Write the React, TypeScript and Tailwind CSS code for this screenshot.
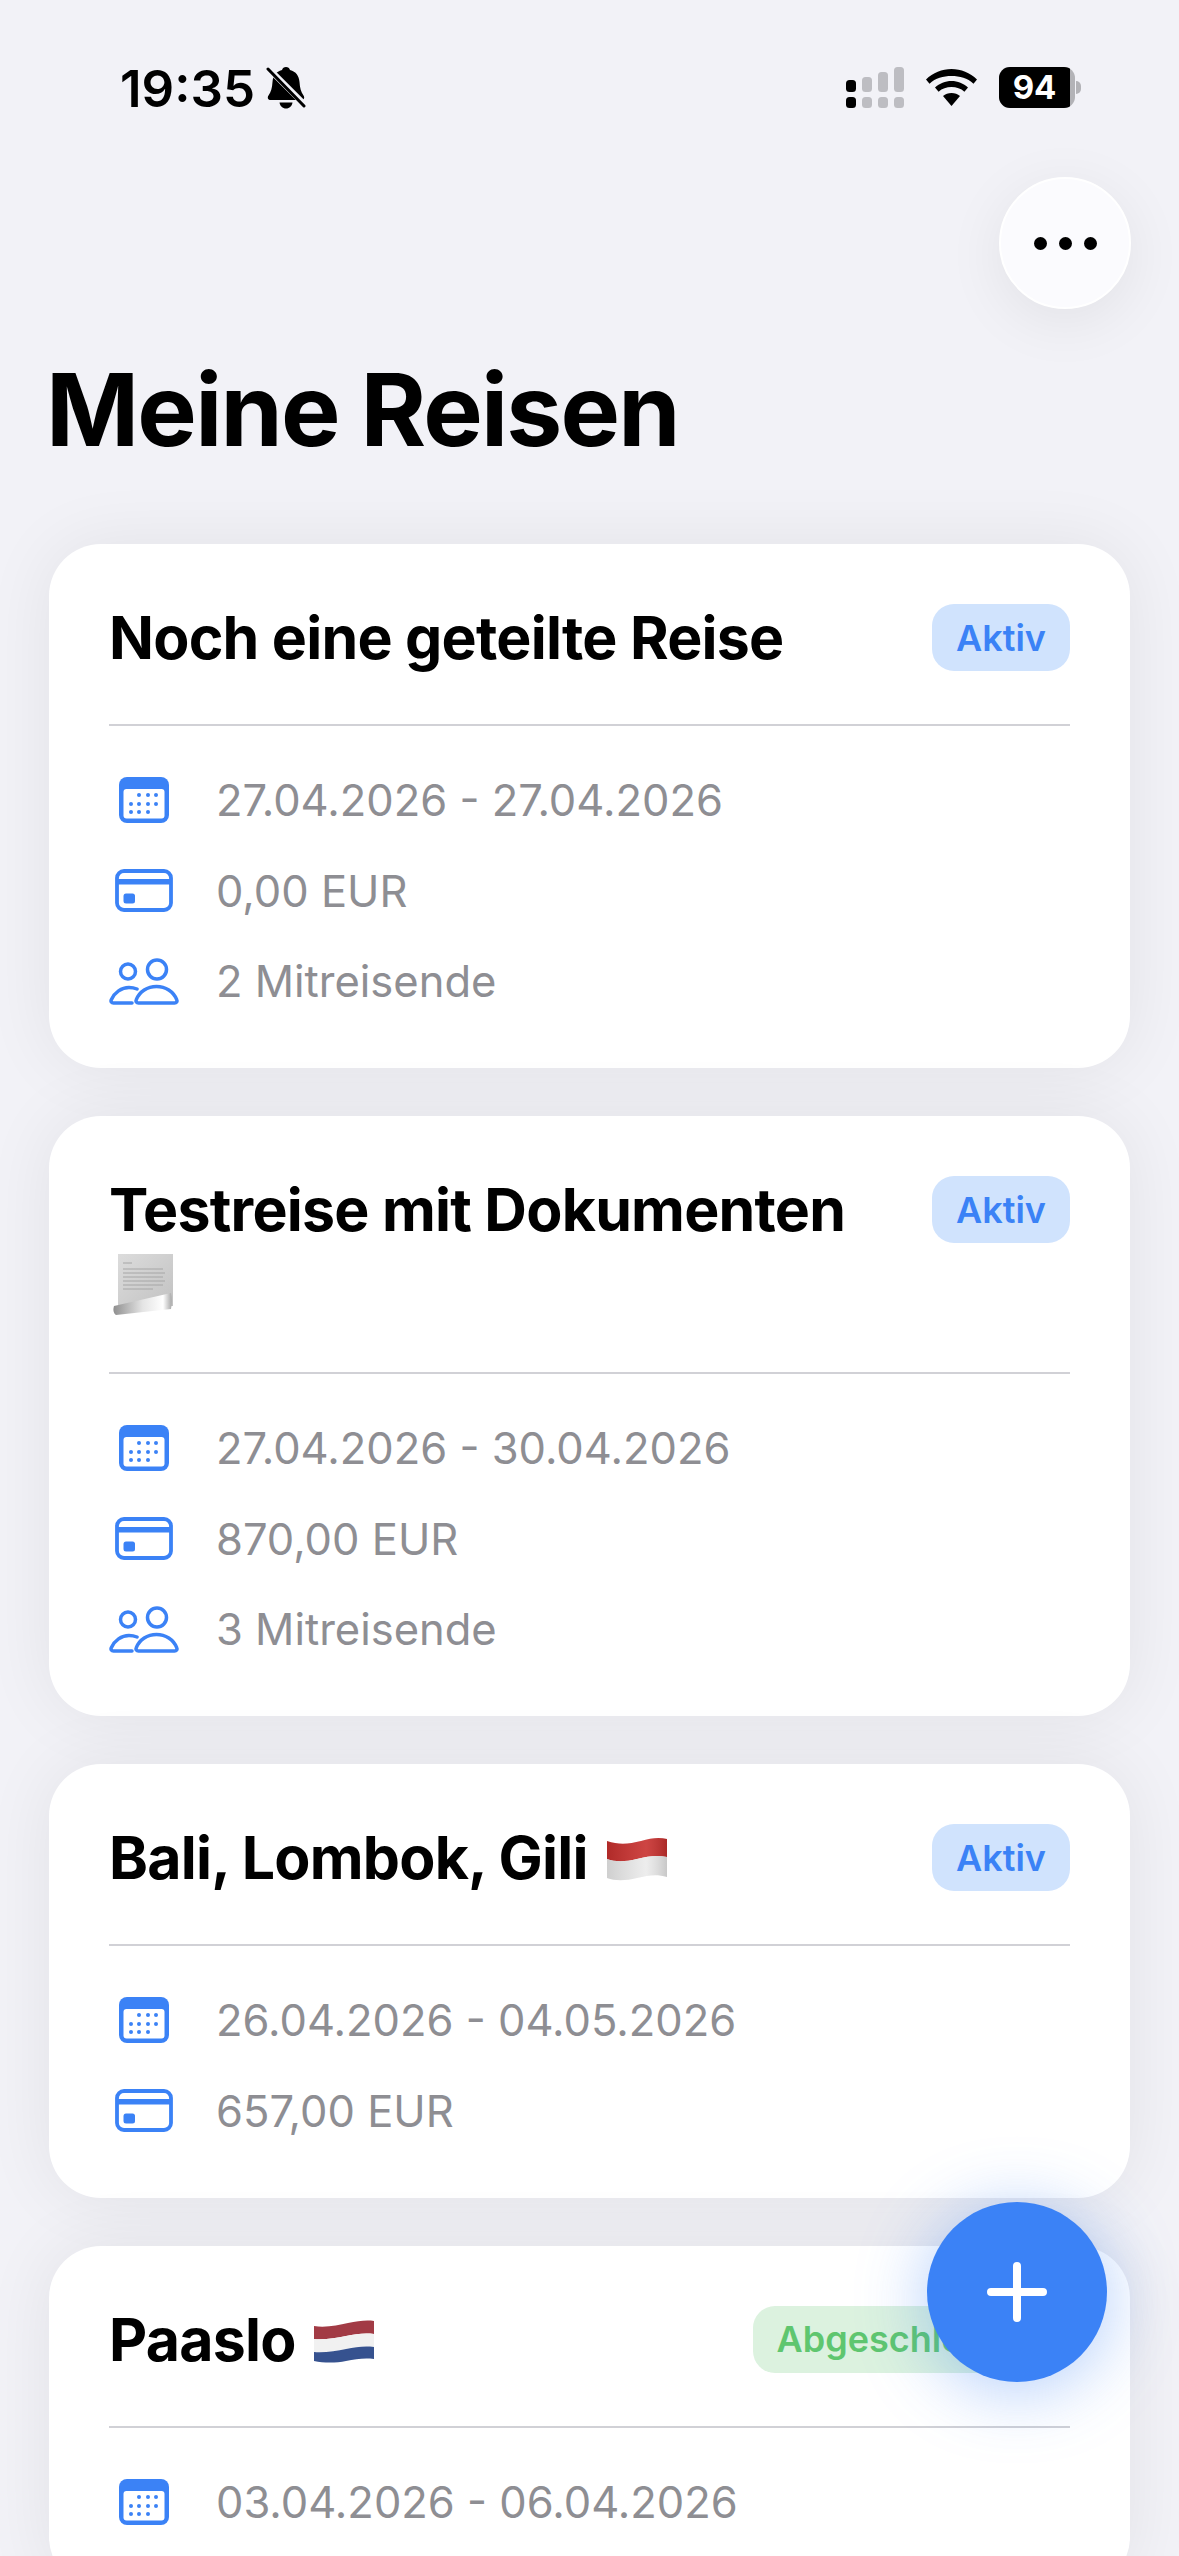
import type { ReactNode } from "react";

function BellSlash() {
  return (
    <svg viewBox="0 0 40 44" className="w-[40px] h-[44px] ml-[11px] mt-[-1px]">
      <path d="M20 1c2 0 3.500 1 4 3 6 1.500 9 6 9.500 12 .4 6 1.500 10 4 13.500 1.500 2.200.5 4.500-2 4.500H4.500c-2.500 0-3.500-2.300-2-4.500C5 26 6.100 22 6.500 16 7 10 10 5.500 16 4c.5-2 2-3 4-3z" fill="#000" />
      <path d="M13.500 36.500h13c-.5 3.500-3 6-6.500 6s-6-2.500-6.500-6z" fill="#000" />
      <path d="M0 0 40 40" stroke="#f2f2f7" strokeWidth="6" />
      <path d="M2 3 38 40" stroke="#000" strokeWidth="3" strokeLinecap="round" />
    </svg>
  );
}

function Signal() {
  const grey = "#bdbdc2";
  return (
    <svg viewBox="0 0 58 41" className="w-[58px] h-[41px]">
      <rect x="0" y="13" width="10" height="12" rx="3.500" fill="#000" />
      <rect x="16" y="10" width="10" height="15" rx="3.500" fill={grey} />
      <rect x="32" y="5" width="10" height="20" rx="3.500" fill={grey} />
      <rect x="48" y="0" width="10" height="25" rx="3.500" fill={grey} />
      <rect x="0" y="30" width="10" height="11" rx="3.500" fill="#000" />
      <rect x="16" y="30" width="10" height="11" rx="3.500" fill={grey} />
      <rect x="32" y="30" width="10" height="11" rx="3.500" fill={grey} />
      <rect x="48" y="30" width="10" height="11" rx="3.500" fill={grey} />
    </svg>
  );
}

function Wifi() {
  return (
    <svg viewBox="0 0 51 37" className="w-[51px] h-[37px]">
      <path d="M25.500 0C35 0 44 3.800 51 10.500l-3.500 4.200C41.500 9 33.800 7 25.500 7S9.500 9 3.500 14.700L0 10.500C7 3.800 16 0 25.500 0z" fill="#000" />
      <path d="M25.500 12c6.200 0 12 2.400 16.500 6.500l-3.600 4.200c-3.500-3.200-8-4.700-12.900-4.700s-9.400 1.500-12.900 4.700L9 18.500C13.500 14.400 19.300 12 25.500 12z" fill="#000" />
      <path d="M25.500 24c3.200 0 6.200 1.100 8.500 3.100L25.500 37 17 27.100c2.300-2 5.300-3.100 8.500-3.100z" fill="#000" />
    </svg>
  );
}

function Battery() {
  return (
    <div className="flex items-center">
      <div className="w-[76px] h-[41px] rounded-[11px] bg-[#b3b3b7] overflow-hidden">
        <div className="w-[71px] h-full bg-black flex items-center justify-center text-white text-[33px] font-bold leading-none">
          94
        </div>
      </div>
      <div className="w-[5px] h-[13px] ml-[1px] rounded-r-full bg-[#b3b3b7]" />
    </div>
  );
}

function CalendarIcon() {
  const dots = [
    [20, 18], [29, 18], [37, 18],
    [12, 27], [20, 27], [29, 27], [37, 27],
    [12, 35], [20, 35], [29, 35],
  ];
  return (
    <svg viewBox="0 0 50 46" className="w-[50px] h-[46px]">
      <rect width="50" height="46" rx="8" fill="#3b82f6" />
      <rect x="4.500" y="12" width="41" height="29.500" rx="3" fill="#fff" />
      {dots.map(([x, y]) => (
        <circle key={`${x}-${y}`} cx={x} cy={y} r="2" fill="#3b82f6" />
      ))}
    </svg>
  );
}

function CardIcon() {
  return (
    <svg viewBox="0 0 58 43" className="w-[58px] h-[43px]">
      <rect x="2" y="2" width="54" height="39" rx="7" fill="none" stroke="#3b82f6" strokeWidth="3.800" />
      <rect x="2" y="10" width="54" height="5.500" fill="#3b82f6" />
      <rect x="8.500" y="24.500" width="11.500" height="10" rx="2.500" fill="#3b82f6" />
    </svg>
  );
}

function PeopleIcon() {
  return (
    <svg viewBox="0 0 70 47" className="w-[70px] h-[47px]" fill="none" stroke="#3b82f6" strokeWidth="3.500">
      <circle cx="19" cy="13.500" r="7.500" />
      <circle cx="48" cy="11.500" r="9.500" />
      <path d="M29.500 45h36c2 0 3-1.500 2.200-3.300C64.500 33.500 56.500 28.500 47.500 28.500S30.500 33.500 27.300 41.700C26.500 43.500 27.500 45 29.500 45z" />
      <path d="M23 45H4.500c-2 0-3-1.500-2.200-3.300C5.500 34.500 12.500 29.500 20 29.500c3 0 5.500.5 8 1.500" strokeLinecap="round" />
    </svg>
  );
}

function FlagIndonesia() {
  return (
    <svg viewBox="0 0 60 44" className="inline-block w-[60px] h-[44px] ml-[6px] align-[-2px]">
      <defs>
        <linearGradient id="idShade" x1="0" x2="1" y1="0" y2="0">
          <stop offset="0" stopColor="#000" stopOpacity="0.12" />
          <stop offset="0.65" stopColor="#fff" stopOpacity="0.1" />
          <stop offset="1" stopColor="#000" stopOpacity="0.15" />
        </linearGradient>
      </defs>
      <path d="M0 4C12 8 22 7 34 4 44 1 52 0 60 2V20C50 18 42 19 30 22 18 25 8 25 0 22Z" fill="#c8302e" />
      <path d="M0 22C8 25 18 25 30 22 42 19 50 18 60 20V40C50 37 42 38 30 41 18 44 8 44 0 41Z" fill="#ebebeb" />
      <path d="M0 4C12 8 22 7 34 4 44 1 52 0 60 2V40C50 37 42 38 30 41 18 44 8 44 0 41Z" fill="url(#idShade)" />
    </svg>
  );
}

function FlagNetherlands() {
  return (
    <svg viewBox="0 0 60 44" className="inline-block w-[60px] h-[44px] ml-[5px] align-[-2px]">
      <path d="M0 7C12 9 24 6 34 4 44 2 52 1 60 2V15C50 14 42 15 32 17 22 19 10 21 0 20Z" fill="#a23b45" />
      <path d="M0 20C10 21 22 19 32 17 42 15 50 14 60 15V28C50 27 42 28 32 30 22 32 10 34 0 33Z" fill="#f1f1f1" />
      <path d="M0 33C10 34 22 32 32 30 42 28 50 27 60 28V40C50 39 42 40 32 42 22 44 10 44 0 42Z" fill="#36528f" />
    </svg>
  );
}

function ScrollEmoji() {
  return (
    <svg viewBox="0 0 60 62" className="inline-block w-[60px] h-[62px] align-top mt-[6px] ml-[4px]">
      <defs>
        <linearGradient id="paper" x1="0" x2="1" y1="0" y2="1">
          <stop offset="0" stopColor="#dcdcdc" />
          <stop offset="1" stopColor="#c2c2c2" />
        </linearGradient>
        <linearGradient id="curl" x1="0" x2="1" y1="0" y2="0">
          <stop offset="0" stopColor="#8f8f8f" />
          <stop offset="0.5" stopColor="#e4e4e4" />
          <stop offset="0.85" stopColor="#ffffff" />
          <stop offset="1" stopColor="#a8a8a8" />
        </linearGradient>
      </defs>
      <rect x="5" y="0" width="55" height="52" fill="url(#paper)" />
      <g stroke="#a6a6a6" strokeWidth="1">
        <path d="M10 9h9M10 15h40M10 19h42M10 23h40M10 27h42M10 31h40M10 35h30" />
      </g>
      <path d="M1 52 58 39c1 5 1 11 0 16L3 61C0 59 0 55 1 52Z" fill="url(#curl)" />
    </svg>
  );
}

function Badge({ label, done }: { label: string; done?: boolean }) {
  return (
    <div
      className={
        done
          ? "shrink-0 h-[67px] px-[24px] flex items-center rounded-[22px] bg-[#dcf2df] text-[#5fc66f] text-[36px] font-semibold"
          : "shrink-0 h-[67px] px-[24px] flex items-center rounded-[22px] bg-[#d0e3fd] text-[#3b82f6] text-[36px] font-semibold"
      }
    >
      {label}
    </div>
  );
}

function Row({ icon, text }: { icon: ReactNode; text: string }) {
  return (
    <div className="flex items-center h-[56px]">
      <div className="w-[70px] flex justify-center shrink-0">{icon}</div>
      <span className="ml-[37px] text-[43.5px] leading-[56px] text-[#8e8e93]">{text}</span>
    </div>
  );
}

function TripCard({ title, badge, rows }: { title: ReactNode; badge: ReactNode; rows: ReactNode }) {
  return (
    <div className="bg-white rounded-[52px] px-[60px] pt-[60px] pb-[59px] shadow-[0_0_70px_rgba(0,0,0,0.07)]">
      <div className="flex items-start justify-between gap-[40px] pb-[48px] border-b-2 border-[#d1d1d6]">
        <h2 className="mt-[-4px] text-[59px] leading-[76px] font-bold text-black tracking-[-0.75px]">{title}</h2>
        {badge}
      </div>
      <div className="flex flex-col gap-[34.5px] pt-[46px]">{rows}</div>
    </div>
  );
}

export default function App() {
  return (
    <div className="relative w-[1179px] h-[2556px] overflow-hidden bg-[#f2f2f7] font-['Inter',sans-serif]">
      <div className="flex items-start justify-between h-[177px] pl-[120px] pr-[98px] pt-[67px]">
        <div className="flex items-center">
          <span className="text-[51px] leading-[42px] font-semibold text-black">19:35</span>
          <BellSlash />
        </div>
        <div className="flex items-center">
          <Signal />
          <div className="ml-[22px] mr-[22px]">
            <Wifi />
          </div>
          <Battery />
        </div>
      </div>

      <div className="flex justify-end pr-[48px]">
        <button className="w-[132px] h-[132px] rounded-full bg-[#fbfbfe] border-2 border-white flex items-center justify-center gap-[12px] shadow-[0_12px_60px_rgba(0,0,0,0.07)]">
          <span className="w-[13px] h-[13px] rounded-full bg-black" />
          <span className="w-[13px] h-[13px] rounded-full bg-black" />
          <span className="w-[13px] h-[13px] rounded-full bg-black" />
        </button>
      </div>

      <h1 className="mt-[41px] mb-[74px] pl-[46px] text-[100px] leading-[120px] font-bold text-black tracking-[-1.8px]">
        Meine Reisen
      </h1>

      <div className="flex flex-col gap-[48px] px-[49px]">
        <TripCard
          title="Noch eine geteilte Reise"
          badge={<Badge label="Aktiv" />}
          rows={
            <>
              <Row icon={<CalendarIcon />} text="27.04.2026 - 27.04.2026" />
              <Row icon={<CardIcon />} text="0,00 EUR" />
              <Row icon={<PeopleIcon />} text="2 Mitreisende" />
            </>
          }
        />
        <TripCard
          title={
            <>
              Testreise mit Dokumenten <ScrollEmoji />
            </>
          }
          badge={<Badge label="Aktiv" />}
          rows={
            <>
              <Row icon={<CalendarIcon />} text="27.04.2026 - 30.04.2026" />
              <Row icon={<CardIcon />} text="870,00 EUR" />
              <Row icon={<PeopleIcon />} text="3 Mitreisende" />
            </>
          }
        />
        <TripCard
          title={
            <>
              Bali, Lombok, Gili <FlagIndonesia />
            </>
          }
          badge={<Badge label="Aktiv" />}
          rows={
            <>
              <Row icon={<CalendarIcon />} text="26.04.2026 - 04.05.2026" />
              <Row icon={<CardIcon />} text="657,00 EUR" />
            </>
          }
        />
        <TripCard
          title={
            <>
              Paaslo <FlagNetherlands />
            </>
          }
          badge={<Badge label="Abgeschlossen" done />}
          rows={<Row icon={<CalendarIcon />} text="03.04.2026 - 06.04.2026" />}
        />
      </div>

      <button className="absolute left-[927px] top-[2202px] w-[180px] h-[180px] rounded-full bg-[#3b82f6] flex items-center justify-center shadow-[0_8px_70px_rgba(59,130,246,0.4)]">
        <svg viewBox="0 0 60 60" className="w-[60px] h-[60px]">
          <path d="M30 4v52M4 30h52" stroke="#fff" strokeWidth="8" strokeLinecap="round" />
        </svg>
      </button>
    </div>
  );
}
